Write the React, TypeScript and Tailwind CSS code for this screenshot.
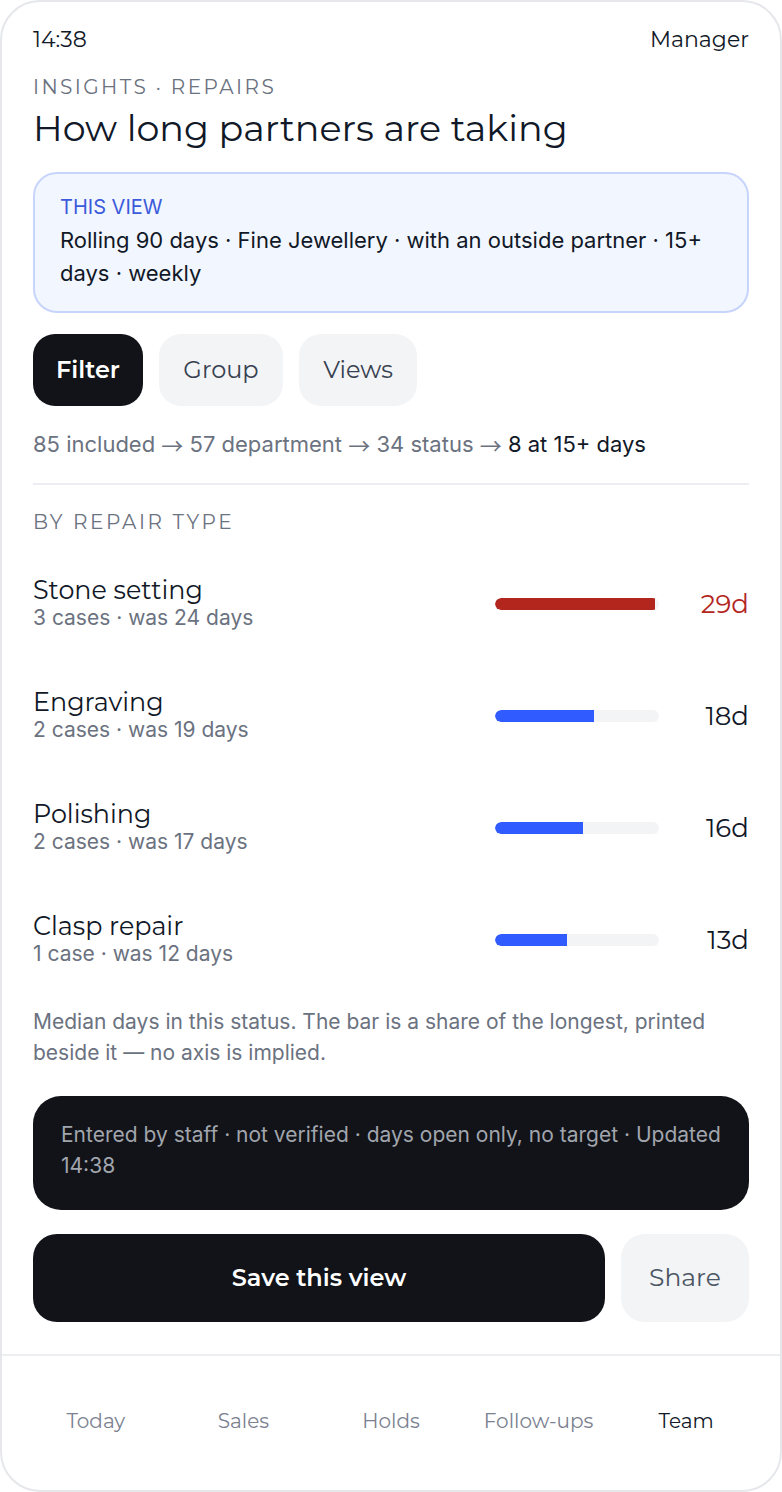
import React from "react";

const rows = [
  { name: "Stone setting", sub: "3 cases · was 24 days", days: 29, hot: true },
  { name: "Engraving", sub: "2 cases · was 19 days", days: 18 },
  { name: "Polishing", sub: "2 cases · was 17 days", days: 16 },
  { name: "Clasp repair", sub: "1 case · was 12 days", days: 13 },
];

const H = "[font-family:Montserrat,'Noto_Sans',sans-serif]";
const B = "[font-family:Inter,'Liberation_Sans',sans-serif]";
const A = "[font-family:'Noto_Sans_CJK_SC',sans-serif]";

function Arrow() {
  return <span className={`inline-block h-[28px] leading-[28px] align-top ${A}`}>→</span>;
}

export default function App() {
  return (
    <div className="w-[782px] h-[1492px] bg-white">
      <div className="w-full h-full rounded-[40px] border-2 border-[#e5e7eb] flex flex-col overflow-hidden">
        <div className={`px-[31px] pt-[24px] flex justify-between text-[22px] leading-[28px] text-[#111827] ${H}`}>
          <span>14:38</span>
          <span>Manager</span>
        </div>
        <div className="px-[31px] flex flex-col">
          <div className={`mt-[21px] text-[20px] leading-[24px] tracking-[0.12em] text-[#6b7280] ${H}`}>INSIGHTS · REPAIRS</div>
          <h1 className={`mt-[7px] text-[36.5px] leading-[44px] text-[#111827] ${H}`}>How long partners are taking</h1>
          <div className={`mt-[22px] h-[141px] rounded-[24px] border-2 border-[#c7d4fb] bg-[#f2f6fe] px-[25px] pt-[21px] ${B}`}>
            <div className="text-[20px] leading-[24px] text-[#3b5bdb]">THIS VIEW</div>
            <div className="mt-[5px] text-[22px] leading-[33px] text-[#111827]">Rolling 90 days · Fine Jewellery · with an outside partner · 15+ days · weekly</div>
          </div>
          <div className={`mt-[21px] flex gap-4 text-[24px] ${H}`}>
            <div className="h-[72px] w-[110px] rounded-[22px] bg-[#111318] text-white font-semibold flex items-center justify-center">Filter</div>
            <div className="h-[72px] w-[124px] rounded-[22px] bg-[#f3f4f6] text-[#374151] flex items-center justify-center">Group</div>
            <div className="h-[72px] w-[118px] rounded-[22px] bg-[#f3f4f6] text-[#374151] flex items-center justify-center">Views</div>
          </div>
          <div className={`mt-[24px] h-[28px] text-[22px] leading-[28px] text-[#6b7280] ${B}`}>
            85 included <Arrow /> 57 department <Arrow /> 34 status <Arrow /> <span className="text-[#111827]">8 at 15+ days</span>
          </div>
          <div className="mt-[25px] h-[2px] bg-[#eceef1]" />
          <div className={`mt-[25px] text-[20px] leading-[24px] tracking-[0.13em] text-[#6b7280] ${H}`}>BY REPAIR TYPE</div>
          <div className="mt-[42px] flex flex-col gap-[56px]">
            {rows.map((r) => (
              <div key={r.name} className="flex items-center h-[56px]">
                <div className="flex-1 flex flex-col">
                  <div className={`text-[25.4px] leading-[28px] text-[#111827] ${H}`}>{r.name}</div>
                  <div className={`text-[21px] leading-[28px] text-[#6b7280] ${B}`}>{r.sub}</div>
                </div>
                <div className="w-[164px] h-[12px] rounded-full bg-[#f3f4f6] overflow-hidden">
                  <div
                    className={r.hot ? "h-full bg-[#b3261e] rounded-l-full" : "h-full bg-[#2f5bff] rounded-l-full"}
                    style={{ width: `${r.hot ? 97.5 : (r.days / 29) * 97.5}%` }}
                  />
                </div>
                <div className={`w-[90px] text-right text-[26px] leading-[30px] ${H} ` + (r.hot ? "text-[#b3261e]" : "text-[#111827]")}>{r.days}d</div>
              </div>
            ))}
          </div>
          <div className={`mt-[38px] text-[21px] leading-[31px] text-[#6b7280] ${B}`}>
            Median days in this status. The bar is a share of the longest, printed beside it — no axis is implied.
          </div>
          <div className={`mt-[28px] h-[114px] rounded-[28px] bg-[#111318] px-[28px] pt-[23px] text-[21px] leading-[31px] text-[#a1a5ad] ${B}`}>
            Entered by staff · not verified · days open only, no target · Updated 14:38
          </div>
          <div className={`mt-[24px] flex gap-4 text-[24px] ${H}`}>
            <div className="h-[88px] flex-1 rounded-[24px] bg-[#111318] text-white font-semibold flex items-center justify-center">Save this view</div>
            <div className="h-[88px] w-[128px] rounded-[24px] bg-[#f3f4f6] text-[#4b5563] text-[25px] flex items-center justify-center">Share</div>
          </div>
        </div>
        <div className="mt-[32px] h-[2px] bg-[#eceef1]" />
        <div className={`flex px-[20px] pt-[51px] text-[20px] leading-[28px] ${H}`}>
          {["Today", "Sales", "Holds", "Follow-ups", "Team"].map((t) => (
            <div key={t} className={"flex-1 text-center " + (t === "Team" ? "text-[#111827]" : "text-[#7b8190]")}>{t}</div>
          ))}
        </div>
      </div>
    </div>
  );
}
